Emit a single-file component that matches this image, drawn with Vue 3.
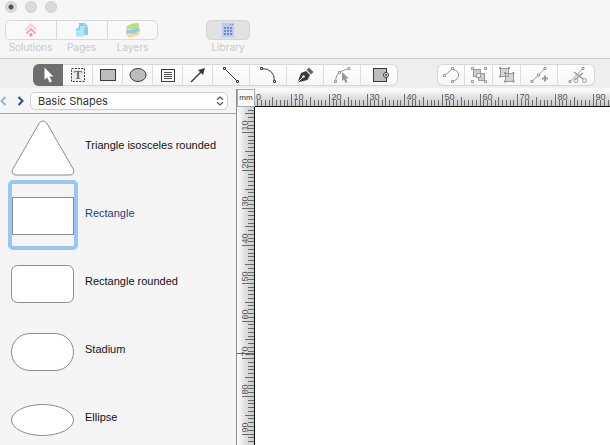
<script setup>
import { ref, computed, onMounted, onUnmounted } from 'vue'

const MM = 3.767
const H_ORIGIN = -1.5
const V_ORIGIN = -12.5

const view = ref({ width: window.innerWidth, height: window.innerHeight })
const measure = () => {
  view.value = { width: window.innerWidth, height: window.innerHeight }
}
onMounted(() => window.addEventListener('resize', measure))
onUnmounted(() => window.removeEventListener('resize', measure))

const ticks = (origin, length, first) => {
  const list = []
  for (let i = first; origin + i * MM < length; i++) {
    list.push({
      pos: Math.round(origin + i * MM) + 0.5,
      len: i % 10 === 0 ? 12 : i % 5 === 0 ? 9 : 6,
      label: i,
    })
  }
  return list
}
const hTicks = computed(() => ticks(H_ORIGIN, view.value.width - 255, 1))
const vTicks = computed(() => ticks(V_ORIGIN, view.value.height - 107, 4))
const hPath = computed(() => hTicks.value.map((t) => `M${t.pos} ${17 - t.len}V17`).join(''))
const vPath = computed(() => vTicks.value.map((t) => `M${17 - t.len} ${t.pos}H17`).join(''))
const hLabels = computed(() =>
  hTicks.value.filter((t) => t.label % 10 === 0 && t.pos + 13 < view.value.width - 255)
)
const vLabels = computed(() => vTicks.value.filter((t) => t.label % 10 === 0))

const drawTools = ['Select', 'Text', 'Rectangle', 'Ellipse', 'Text block', 'Arrow', 'Line', 'Arc', 'Pen', 'Edit points', 'Shape action']
const editTools = ['Close path', 'Group', 'Ungroup', 'Add point', 'Cut path']
const tool = ref('Select')

const shapes = ['Triangle isosceles rounded', 'Rectangle', 'Rectangle rounded', 'Stadium', 'Ellipse']
const picked = ref('Rectangle')
const library = ref('Basic Shapes')
</script>

<template>
  <div class="window">
    <header class="titlebar">
      <div class="lights">
        <button class="light edited" aria-label="Close"></button>
        <button class="light" aria-label="Minimize"></button>
        <button class="light" aria-label="Zoom"></button>
      </div>
      <nav class="panels">
        <div class="segment">
          <button class="panel">
            <span class="face">
              <svg width="20" height="18" viewBox="0 0 20 18" fill="none" stroke-width="2">
                <path d="M4.5 9 10 3.5 15.500 9" stroke="#f5cfe0" />
                <path d="M5.500 12.500 10 8l4.500 4.500" stroke="#e6adc6" />
                <path d="M10 12 11.500 14l-1.500 1.500-1.500-1.500z" fill="#d9a3a8" stroke="#d9a3a8" stroke-width="1" />
              </svg>
            </span>
            <span class="caption">Solutions</span>
          </button>
          <button class="panel">
            <span class="face">
              <svg width="20" height="18" viewBox="0 0 20 18">
                <path d="M7 2h6l3 3v9H7z" fill="#8ecbe6" />
                <path d="M12.500 2v3.500H16" fill="none" stroke="#b9e4f3" />
                <path d="M7 5h5v10.500H4V8z" fill="#a9e9fa" />
                <path d="M4 8.500h3.500V5" fill="none" stroke="#80cfe6" />
              </svg>
            </span>
            <span class="caption">Pages</span>
          </button>
          <button class="panel">
            <span class="face">
              <svg width="20" height="18" viewBox="0 0 20 18">
                <path d="M3 12l5-1 9-1-1 4-8 2.500-4-1z" fill="#f8d79c" />
                <path d="M3 9.500l6-1 7-2 1 3-6 3.500-4-1-4 .5z" fill="#92c8f2" />
                <path d="M4 5l5-2.500 7-.5v4.500l-4 2-5-.5-4 1z" fill="#b9df86" />
              </svg>
            </span>
            <span class="caption">Layers</span>
          </button>
        </div>
        <button class="panel library">
          <span class="face">
            <svg width="20" height="18" viewBox="0 0 20 18">
              <path d="M4 2h12v14H4z" fill="#b9cbe9" />
              <path d="M6 6h2v2H6zM9 6h2v2H9zM12 6h2v2h-2zM6 9h2v2H6zM9 9h2v2H9zM12 9h2v2h-2zM6 12h2v2H6zM9 12h2v2H9zM12 12h2v2h-2zM12 3h1v1h-1zM14 3h1v1h-1z" fill="#7189c4" />
            </svg>
          </span>
          <span class="caption">Library</span>
        </button>
      </nav>
    </header>

    <div class="toolbar" role="toolbar" aria-label="Drawing tools">
      <div class="tools">
        <button
          v-for="(t, i) in drawTools"
          :key="t"
          class="tool"
          :class="{ wide: i > 5, active: tool === t }"
          :aria-label="t"
          @click="tool = t"
        >
          <svg width="24" height="20" viewBox="0 0 24 20" fill="none" stroke="#3a3a3a">
            <path v-if="i === 0" d="M8.500 2.500v12.200l2.700-2.300 2.500 5.200 2.300-1.100-2.500-5H17.500z" fill="#fff" stroke="none" />
            <g v-else-if="i === 1">
              <rect x="5.500" y="3.500" width="13" height="13" fill="#ececec" stroke-dasharray="2 1.250" />
              <text x="12" y="14" class="glyph">T</text>
            </g>
            <rect v-else-if="i === 2" x="4.500" y="4.500" width="15" height="11" fill="#bdbdbd" />
            <ellipse v-else-if="i === 3" cx="12" cy="10" rx="8" ry="6.500" fill="#bdbdbd" />
            <g v-else-if="i === 4">
              <rect x="5.500" y="4.500" width="13" height="12" fill="#fafafa" />
              <path d="M8 7.500h8M8 9.500h8M8 11.500h8M8 13.500h8" stroke="#555" />
            </g>
            <g v-else-if="i === 5">
              <path d="M5 17 15 7" stroke-width="1.500" />
              <path d="M19 3l-2 7-5-5z" fill="#3a3a3a" stroke="none" />
            </g>
            <g v-else-if="i === 6">
              <path d="M5.500 3.500l13 13" />
              <path d="M4.500 2.500h2v2h-2zM17.500 15.500h2v2h-2z" fill="#fff" />
            </g>
            <g v-else-if="i === 7">
              <path d="M5.500 3.500q13 0 13 13" />
              <path d="M4.500 2.500h2v2h-2zM17.500 15.500h2v2h-2z" fill="#fff" />
            </g>
            <g v-else-if="i === 8" stroke="none">
              <path d="M4.500 17.500 8 8l5-2 4 4-2.500 5z" fill="#3a3a3a" />
              <path d="M13.500 5l2.500-2.500 4.500 4.500L18 9.500z" fill="#666" />
              <path d="M5 17l5-5" stroke="#eee" />
              <circle cx="10.500" cy="11.500" r="1.200" fill="#eee" />
            </g>
            <g v-else-if="i === 9" stroke="#999">
              <path d="M5.500 16.500Q6 9 10 7t9-3.500" />
              <path d="M4.500 15.500h2v2h-2zM8.500 6.500h2v2h-2zM18 2.500h2v2h-2z" fill="#fff" />
              <path d="M12 7v9l2-1.500 1.500 3.500 2-1-1.500-3.500h3z" fill="#999" stroke="none" />
            </g>
            <g v-else>
              <rect x="5.500" y="3.500" width="13" height="13" fill="#bdbdbd" />
              <circle cx="18" cy="10" r="2.500" fill="#eee" />
              <circle cx="18" cy="10" r="1" fill="#3a3a3a" stroke="none" />
            </g>
          </svg>
        </button>
      </div>
      <div class="tools">
        <button v-for="(t, i) in editTools" :key="t" class="tool" :class="{ wide: i > 2 }" :aria-label="t">
          <svg width="24" height="20" viewBox="0 0 24 20" fill="none" stroke="#999">
            <g v-if="i === 0">
              <path d="M5.500 10.500l8-6.500q6 1.500 6 6t-6 6.500" />
              <path d="M4.500 9.500h2v2h-2zM12.500 2.500h2v2h-2zM12.500 15.500h2v2h-2z" fill="#fff" />
            </g>
            <g v-else-if="i === 1">
              <path d="M6.500 4.500h7v7h-7z" fill="#ccc" />
              <path d="M11.500 8.500h6v7h-6z" fill="#ccc" />
              <path d="M9.500 8.500h4v4h-4z" fill="#eee" />
              <path d="M4.500 2.500h2v2h-2zM17.500 2.500h2v2h-2zM4.500 15.500h2v2h-2zM17.500 15.500h2v2h-2z" fill="#fff" />
            </g>
            <g v-else-if="i === 2">
              <path d="M5.500 3.500h8v8h-8zM10.500 8.500h8v8h-8z" fill="#d4d4d4" />
              <path d="M4 2h2v2H4zM13 2h2v2h-2zM4 10.500h2v2H4zM9 15.500h2v2H9zM17.500 7h2v2h-2zM17.500 15.500h2v2h-2zM9 7h2v2H9z" fill="#999" stroke="none" />
            </g>
            <g v-else-if="i === 3">
              <path d="M5 16.500l13-13" />
              <path d="M15 13.500h6M18 10.500v6" stroke-width="2" />
              <path d="M4 15.500h2v2H4zM17 2.500h2v2h-2zM10.500 9h2v2h-2z" fill="#fff" />
            </g>
            <g v-else>
              <path d="M5 16.500l13-13" />
              <path d="M9 7l9 7M18 8l-8 6.500" stroke-width="1.500" />
              <path d="M4 15.500h2v2H4zM17 2.500h2v2h-2z" fill="#fff" />
              <circle cx="19.500" cy="15.500" r="2" />
              <circle cx="11" cy="15.500" r="2" />
            </g>
          </svg>
        </button>
      </div>
    </div>

    <main class="workspace">
      <aside class="sidebar">
        <div class="picker">
          <button class="step prev" aria-label="Previous library">
            <svg width="8" height="10" viewBox="0 0 8 10" fill="none" stroke="#9fb4c9" stroke-width="2"><path d="M5.500 1 1.500 5l4 4" /></svg>
          </button>
          <button class="step next" aria-label="Next library">
            <svg width="8" height="10" viewBox="0 0 8 10" fill="none" stroke="#2b4c97" stroke-width="2"><path d="M1.500 1l4 4-4 4" /></svg>
          </button>
          <div class="dropdown">
            <select v-model="library" aria-label="Shape library">
              <option>Basic Shapes</option>
            </select>
            <svg class="chevrons" width="8" height="10" viewBox="0 0 8 10" fill="none" stroke="#555" stroke-width="1.300"><path d="M1 3.700 4 1l3 2.700M1 6.300 4 9l3-2.700" /></svg>
          </div>
        </div>
        <ul class="shapes">
          <li v-for="(s, i) in shapes" :key="s">
            <button class="shape" :class="{ picked: picked === s }" @click="picked = s">
              <svg class="thumb" width="62" height="62" viewBox="0 0 62 62" fill="#fff" stroke="#8c8c90">
                <path v-if="i === 0" d="M27.300 7Q31 3 34.700 7L61.500 53.500Q63 58.500 58 59H4Q-1 58.500.500 53.500z" />
                <rect v-else-if="i === 1" x="0.500" y="13.500" width="61" height="37" />
                <rect v-else-if="i === 2" x="-0.500" y="13.500" width="62" height="37" rx="6" />
                <rect v-else-if="i === 3" x="-0.500" y="13.500" width="62" height="37" rx="18.500" />
                <ellipse v-else cx="30.500" cy="32" rx="31" ry="15.500" />
              </svg>
              <span class="name">{{ s }}</span>
            </button>
          </li>
        </ul>
      </aside>

      <section class="board">
        <div class="unit">mm</div>
        <svg class="ruler across" aria-label="Horizontal ruler">
          <path :d="hPath" stroke="#6a6a6a" />
          <text x="1" y="11">0</text>
          <text v-for="l in hLabels" :key="l.label" :x="l.pos + 2" y="11">{{ l.label }}</text>
        </svg>
        <svg class="ruler down" aria-label="Vertical ruler">
          <path :d="vPath" stroke="#6a6a6a" />
          <text v-for="l in vLabels" :key="l.label" :transform="`translate(11 ${l.pos - 2}) rotate(-90)`">{{ l.label }}</text>
          <rect class="pointer" x="0" y="246" width="17" height="1" />
        </svg>
        <div class="canvas"></div>
      </section>
    </main>
  </div>
</template>

<style>
body {
  margin: 0;
}
</style>

<style scoped>
.window {
  display: flex;
  flex-direction: column;
  height: 100vh;
  overflow: hidden;
  background: #f6f6f6;
  font-family: Inter, sans-serif;
}
button {
  display: block;
  margin: 0;
  padding: 0;
  border: 0;
  background: none;
  font: inherit;
  color: inherit;
}
svg {
  display: block;
}
.titlebar {
  display: flex;
  flex-direction: column;
  gap: 7px;
  height: 58px;
  flex: none;
  border-bottom: 1px solid #cbcbcb;
}
.lights {
  display: flex;
  gap: 8px;
  padding: 1px 5px 0;
}
.light {
  width: 12px;
  height: 12px;
  border-radius: 50%;
  background: #dadada;
  border: 1px solid #d0d0d0;
}
.edited {
  background: radial-gradient(circle, #555 2px, #dadada 3px);
}
.panels {
  display: flex;
  gap: 48px;
  padding: 0 5px;
}
.segment {
  display: flex;
}
.panel {
  width: 51px;
}
.face {
  display: flex;
  align-items: center;
  justify-content: center;
  height: 18px;
  border: 1px solid #dadada;
  border-right-width: 0;
  background: #f9f9f9;
}
.panel:first-child .face {
  border-radius: 5px 0 0 5px;
}
.segment .panel:last-child .face {
  border-right-width: 1px;
  border-radius: 0 5px 5px 0;
}
.panel.library {
  width: 44px;
}
.panel.library .face {
  border: 1px solid #d6d6d6;
  border-radius: 5px;
  background: #e1e1e1;
}
.caption {
  display: block;
  text-align: center;
  font-size: 10px;
  line-height: 14px;
  color: #c9c9c9;
}
.toolbar {
  display: flex;
  flex: none;
  align-items: center;
  gap: 39px;
  height: 30px;
  padding: 2px 0 0 33px;
  border-bottom: 1px solid #f8f8f8;
  background: #eeeeef;
  box-sizing: border-box;
}
.tools {
  display: flex;
  border-radius: 6px;
  box-shadow: inset 0 0 0 1px #d6d6d6;
  overflow: hidden;
  background: linear-gradient(#fff, #f6f6f6);
}
.tool {
  display: flex;
  justify-content: center;
  align-items: center;
  width: 30px;
  height: 22px;
  border-right: 1px solid #dcdcdc;
  box-sizing: border-box;
}
.tools + .tools .tool {
  width: 28px;
}
.tools .tool.wide {
  width: 37px;
}
.tools .tool:last-child {
  border-right: 0;
}
.tool.active {
  background: #6e6e6e;
  border-color: #6e6e6e;
}
.glyph {
  font: bold 12px "Liberation Serif", serif;
  text-anchor: middle;
  fill: #666;
  stroke: none;
}
.workspace {
  display: flex;
  flex: 1;
  min-height: 0;
}
.sidebar {
  display: flex;
  flex-direction: column;
  width: 236px;
  flex: none;
  border-right: 1px solid #8e8e92;
  background: #f5f5f5;
}
.picker {
  display: flex;
  align-items: center;
  height: 24px;
  flex: none;
  border-bottom: 1px solid #a6a6a6;
}
.step {
  width: 8px;
}
.next {
  margin: 0 5px 0 9px;
}
.dropdown {
  display: grid;
  flex: 1;
  align-items: center;
  margin-right: 8px;
}
.dropdown select {
  grid-area: 1 / 1;
  height: 18px;
  padding: 0 24px 0 7px;
  border: 1px solid #cfcfcf;
  border-radius: 5px;
  background: #fff;
  appearance: none;
  font: 11px/16px Inter, sans-serif;
  color: #333;
}
.chevrons {
  grid-area: 1 / 1;
  justify-self: end;
  margin-right: 4px;
  pointer-events: none;
}
.shapes {
  display: flex;
  flex-direction: column;
  flex: 1;
  gap: 6px;
  min-height: 0;
  margin: 0;
  padding: 2px 12px 0;
  overflow: hidden;
  list-style: none;
}
.shape {
  display: flex;
  align-items: center;
  gap: 11px;
  width: 100%;
  text-align: left;
  font: 11px/14px "Liberation Sans", sans-serif;
  color: #111;
}
.thumb {
  flex: none;
  overflow: visible;
}
.name {
  padding-bottom: 5px;
}
.picked {
  color: #1f3c8a;
}
.picked .thumb {
  outline: 4px solid #9ac6f5;
  border-radius: 1px;
}
.board {
  display: grid;
  flex: 1;
  min-width: 0;
  grid-template: 18px minmax(0, 1fr) / 18px minmax(0, 1fr);
}
.unit {
  border: 1px solid #a9a9a9;
  background: #f8f8f8;
  font: 8px/16px "Liberation Sans", sans-serif;
  text-align: center;
  color: #333;
}
.ruler {
  width: 100%;
  height: 100%;
  box-sizing: border-box;
  overflow: hidden;
}
.ruler text {
  font: 9px "Liberation Sans", sans-serif;
  fill: #555;
}
.pointer {
  fill: #e8302a;
}
.across {
  border-bottom: 1px solid #111;
  background: linear-gradient(#fafafa 10%, #e2e2e2 45%, #cacaca);
}
.down {
  border-right: 1px solid #111;
  background: linear-gradient(90deg, #fafafa 10%, #e2e2e2 45%, #cacaca);
}
.canvas {
  background: #fff;
}
</style>
